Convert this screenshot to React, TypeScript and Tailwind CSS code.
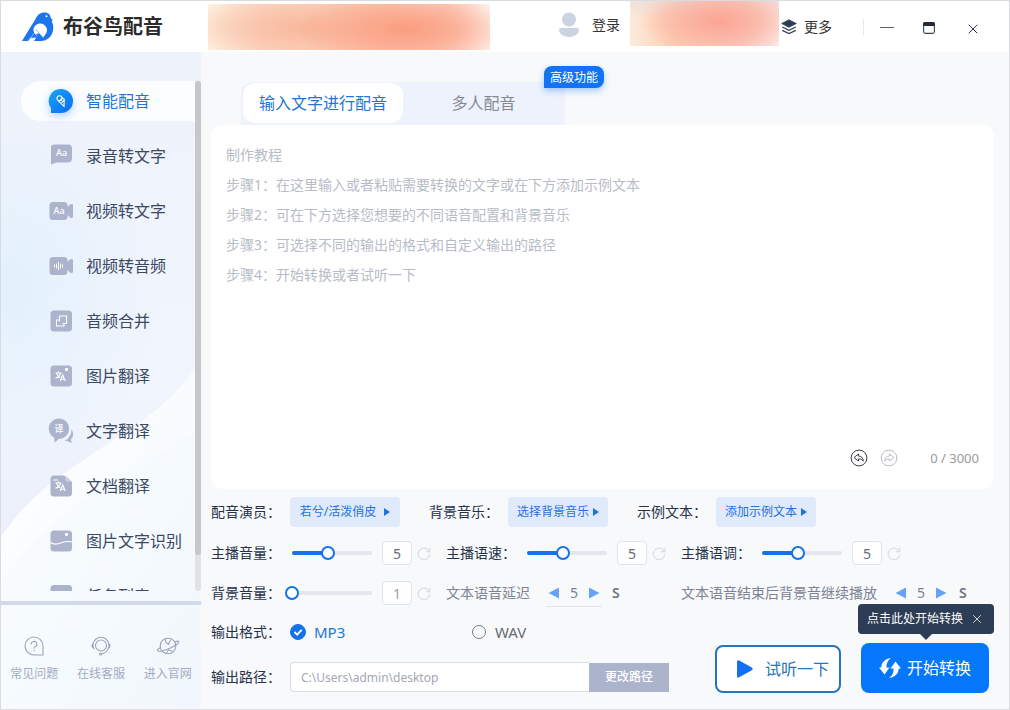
import { useState } from 'react'
import type { ReactNode } from 'react'
import { X } from 'lucide-react'

const navItems = [
  { key: 'voice', label: '智能配音' },
  { key: 'audioText', label: '录音转文字' },
  { key: 'videoText', label: '视频转文字' },
  { key: 'videoAudio', label: '视频转音频' },
  { key: 'merge', label: '音频合并' },
  { key: 'imageTrans', label: '图片翻译' },
  { key: 'textTrans', label: '文字翻译' },
  { key: 'docTrans', label: '文档翻译' },
  { key: 'ocr', label: '图片文字识别' },
  { key: 'tasks', label: '任务列表' },
]

const tutorial = [
  '制作教程',
  '步骤1：在这里输入或者粘贴需要转换的文字或在下方添加示例文本',
  '步骤2：可在下方选择您想要的不同语音配置和背景音乐',
  '步骤3：可选择不同的输出的格式和自定义输出的路径',
  '步骤4：开始转换或者试听一下',
].join('\n')

function Logo() {
  return (
    <svg viewBox="0 0 32 30" className="h-[30px] w-8">
      <path d="M0 29 13.500 7C15.500 3 18 .6 22.500 .6c4 0 6 2.400 6.200 5.200l2 2.400-1 1c1.300 2.600 1.800 5 1.500 8C30.500 24 25.500 29 18.500 29h-6.500l2.200-3.600L8 26l-2 3z" fill="#1c74ee" />
      <path d="M13.200 22.500a6.800 6.600 0 1 1 11-1.300l-3 4.200-3.800-4.200z" fill="#fff" />
      <path d="m13.500 17 7.500 8.500M6 29l6.500-8 3 3.500" stroke="#8dbbf8" strokeWidth="1" fill="none" />
      <circle cx="24.500" cy="4.200" r="1" fill="#fff" />
    </svg>
  )
}

// glifo "文A" usado nos itens de tradução
function TransGlyph() {
  return (
    <g fill="none" stroke="#fff" strokeWidth="1.100">
      <path d="M6.500 9h6M9.500 7.500V9M11.500 9c-.6 2.500-2.500 4.300-5 5.200M7.500 9.500c.8 2 2 3.500 3.800 4.300" />
      <path d="m11.300 17 2.400-6 2.500 6M12.200 15.200h3" />
    </g>
  )
}

function NavIcon({ name }: { name: string }) {
  const fill = '#abb4cc'
  return (
    <svg viewBox="0 0 24 24" className={`h-6 w-6 shrink-0 overflow-visible ${name === 'voice' ? 'drop-shadow-[0_3px_4px_rgba(30,130,255,0.35)]' : ''}`}>
      {name === 'voice' && (
        <>
          <defs>
            <linearGradient id="voiceFill" x1="0" y1="0" x2="1" y2="1">
              <stop offset="0" stopColor="#16a5f5" />
              <stop offset="1" stopColor="#0c6cf0" />
            </linearGradient>
          </defs>
          <path d="M12 0a12 12 0 1 1 0 24H2v-5A12 12 0 0 1 12 0z" fill="url(#voiceFill)" />
          <g fill="none" stroke="#fff" strokeWidth="1.100">
            <circle cx="10.500" cy="9.300" r="2.500" />
            <path d="m8.800 11.300 6.200 6 .2-7.200-2.400-1.300M10.500 11.800l2.500-2M12.500 13.500l2.500-2" />
          </g>
        </>
      )}
      {name === 'audioText' && (
        <>
          <path d="M5 .5h14a4 4 0 0 1 4 4v10a4 4 0 0 1-4 4H7.500L2 20.500V3.500a3 3 0 0 1 3-3z" fill={fill} />
          <text x="7" y="12" fontSize="9" fill="#fff" className="font-medium">Aa</text>
        </>
      )}
      {(name === 'videoText' || name === 'videoAudio') && (
        <>
          <path d="M4 3h11a3.500 3.500 0 0 1 3.500 3.500V8L21 5.600Q23.500 4 24 6v12q-.5 2-3 .4L18.500 16v1.500A3.500 3.500 0 0 1 15 21H4a3.500 3.500 0 0 1-3.500-3.500v-11A3.500 3.500 0 0 1 4 3z" fill={fill} />
          {name === 'videoText' ? (
            <text x="4.500" y="15" fontSize="9" fill="#fff" className="font-medium">Aa</text>
          ) : (
            <path d="M5.500 10.500v3M7.500 9.500v5M9.500 8v8M11.500 9.500v5M13.500 10.500v3" stroke="#fff" strokeWidth="1" />
          )}
        </>
      )}
      {name === 'merge' && (
        <>
          <rect x="1.500" y="1.500" width="21.500" height="21" rx="3.500" fill={fill} />
          <path d="M10.500 7h7v7.500h-2.500V17H7.500v-6h3zM10.500 11v1.500M15 14.500h-1.500" fill="none" stroke="#fff" strokeWidth="1.100" />
        </>
      )}
      {name === 'imageTrans' && (
        <>
          <rect x="1.500" y="1.500" width="21.500" height="21" rx="3.500" fill={fill} />
          <TransGlyph />
          <rect x="16" y="4" width="3" height="3" rx="1" fill="#fff" />
        </>
      )}
      {name === 'textTrans' && (
        <>
          <path d="M22.500 10.500c2.500 3.500 2 7.500-.5 9.700l.5 4-4-2.200h-3c4-2 7-6 7-11.500z" fill={fill} />
          <path d="M10.500-.5a10.200 10.200 0 1 1-1 20.400L5.500 24l-.2-5.200A10.200 10.200 0 0 1 10.500-.5z" fill={fill} />
          <text x="5.500" y="13" fontSize="9" fill="#fff" className="font-medium">译</text>
        </>
      )}
      {name === 'docTrans' && (
        <>
          <path d="M5 1.500h10l8 6.500v11a3.500 3.500 0 0 1-3.500 3.500H5A3.500 3.500 0 0 1 1.500 19V5A3.500 3.500 0 0 1 5 1.500z" fill={fill} />
          <path d="M16.500 1.500 23 7.500h-4.500a2 2 0 0 1-2-2z" fill="#ccd3e3" />
          <path d="M4 6h5" stroke="#fff" strokeWidth="1" />
          <TransGlyph />
        </>
      )}
      {name === 'ocr' && (
        <>
          <rect x="1.500" y="1.500" width="21.500" height="21" rx="3.500" fill={fill} />
          <path d="M1.500 13.500c4 3 7.500 1.500 11 .3s6.500-2 10.500-.8" fill="none" stroke="#fff" strokeWidth="1.200" />
          <rect x="16" y="4" width="3" height="3" rx="1" fill="#fff" />
        </>
      )}
      {name === 'tasks' && <rect x="1.500" y="1" width="21.500" height="22" rx="3.500" fill={fill} />}
    </svg>
  )
}

function ResetIcon() {
  return (
    <svg viewBox="0 0 14 14" className="h-3.5 w-3.5" fill="none" stroke="#dcdfe6" strokeWidth="1.200">
      <path d="M12.300 5.500A5.800 5.800 0 1 0 12.800 8M12.800 1.500v4.200H9" />
    </svg>
  )
}

function SliderField({ id, label, initial, muted }: { id: string; label: string; initial: number; muted?: boolean }) {
  const [value, setValue] = useState(initial)
  const percent = ((value - 1) / 9) * 100
  return (
    <div className="flex h-6 items-center">
      <label htmlFor={id} className="w-[81px] shrink-0 text-[#27324a]">{label}</label>
      <div className="relative h-1 w-20 shrink-0 rounded-full bg-[#e3e6ec]">
        <div className="h-1 rounded-full bg-[#1472ea]" style={{ width: `${percent}%` }} />
        <input
          id={id}
          type="range"
          min={1}
          max={10}
          value={value}
          onChange={(e) => setValue(Number(e.target.value))}
          className="absolute -top-[5px] -left-[7px] h-3.5 w-[94px] appearance-none bg-transparent [&::-webkit-slider-thumb]:h-3.5 [&::-webkit-slider-thumb]:w-3.5 [&::-webkit-slider-thumb]:appearance-none [&::-webkit-slider-thumb]:rounded-full [&::-webkit-slider-thumb]:border-2 [&::-webkit-slider-thumb]:border-[#1472ea] [&::-webkit-slider-thumb]:bg-white"
        />
      </div>
      <input
        aria-label={label}
        value={value}
        onChange={(e) => setValue(Number(e.target.value) || 1)}
        className={`ml-2.5 h-6 w-[30px] rounded-sm border border-[#dde3f0] bg-white text-center ${muted ? 'text-[#9a9fa9]' : 'text-[#666c78]'}`}
      />
      <button type="button" aria-label="重置" className="ml-[5px]"><ResetIcon /></button>
    </div>
  )
}

function Stepper({ label, underlined }: { label: string; underlined?: boolean }) {
  const [value, setValue] = useState(5)
  return (
    <div className="flex h-6 items-center whitespace-nowrap text-[#7c8393]">
      <span>{label}</span>
      <div className={`ml-4 flex h-7 w-14 shrink-0 items-center justify-between border-b px-0.5 ${underlined ? 'border-[#e0e4ec]' : 'border-transparent'}`}>
        <button type="button" aria-label="减少" onClick={() => setValue(value - 1)}>
          <svg viewBox="0 0 11 12" className="h-3 w-[11px]"><path d="M11 .5v11L.5 6z" fill="#66a3f7" /></svg>
        </button>
        <span>{value}</span>
        <button type="button" aria-label="增加" onClick={() => setValue(value + 1)}>
          <svg viewBox="0 0 11 12" className="h-3 w-[11px]"><path d="M0 .5v11L10.500 6z" fill="#66a3f7" /></svg>
        </button>
      </div>
      <span className="ml-2.5 font-semibold text-[#70757f]">S</span>
    </div>
  )
}

function PickButton({ label, children, wide }: { label: string; children: ReactNode; wide?: boolean }) {
  return (
    <div className="flex items-center">
      <span className="w-[79px] text-[#27324a]">{label}</span>
      <button type="button" className={`flex h-[30px] items-center justify-center rounded-sm bg-[#e0eafa] text-xs text-[#1d72dc] ${wide ? 'w-[110px] gap-2' : 'w-[100px] gap-1'}`}>
        {children}
        <svg viewBox="0 0 6 8" className="h-2 w-1.5"><path d="M0 0v8l6-4z" fill="#1d72dc" /></svg>
      </button>
    </div>
  )
}

function FooterLink({ label, children }: { label: string; children: ReactNode }) {
  return (
    <a href="#" className="flex flex-1 flex-col items-center gap-2 text-xs leading-5 whitespace-nowrap text-[#a3abc2]">
      <svg viewBox="0 0 20 20" className="h-5 w-5 overflow-visible" fill="none" stroke="#9ba3ba" strokeWidth="1.100">{children}</svg>
      {label}
    </a>
  )
}

export default function App() {
  const [text, setText] = useState('')
  const [format, setFormat] = useState('MP3')
  const [path, setPath] = useState('C:\\Users\\admin\\desktop')

  return (
    <div className="flex h-screen min-h-[640px] flex-col border border-[#d9dbde] bg-[#f7f9fb] font-['Noto_Sans','Noto_Sans_CJK_SC',sans-serif] text-sm leading-5">
      {/* Barra de título */}
      <header className="flex h-[51px] shrink-0 items-center bg-white text-[#333]">
        <div className="flex flex-1 items-center pl-[21px]">
          <Logo />
          <h1 className="ml-[9px] text-xl font-bold whitespace-nowrap text-[#2b2b2b]">布谷鸟配音</h1>
          <div className="ml-[45px] h-[46px] w-[282px] bg-[radial-gradient(ellipse_110px_38px_at_70%_55%,#fb9d7f_0%,#fba78ccc_45%,transparent_100%),radial-gradient(ellipse_130px_38px_at_35%_52%,#f8b89b_0%,#f9c2a9aa_55%,transparent_100%),linear-gradient(90deg,#fff3e6_0%,#fbdcc8_20%,#fbcdb9_60%,#fbd3c5_85%,#fff3ee_100%)]" />
        </div>
        <button type="button" className="flex items-center gap-3 pr-2.5 pb-1">
          <svg viewBox="0 0 22 26" className="h-[26px] w-[22px]" fill="#cbd2e1">
            <circle cx="11" cy="7.500" r="7" />
            <path d="M3 16h16q2 0 2 2c0 4-5 7-10 7s-10-3-10-7q0-2 2-2z" />
          </svg>
          登录
        </button>
        <div className="h-[45px] w-[149px] self-start bg-[radial-gradient(ellipse_80px_38px_at_60%_45%,#fba594_0%,#fbb3a2cc_50%,transparent_100%),linear-gradient(180deg,#e9dfe0aa_0%,transparent_40%),linear-gradient(90deg,#fdeadb_0%,#fcd2b4_30%,#fcd3c8_75%,#fdeceb_100%)]" />
        <button type="button" className="ml-0.5 flex items-center gap-[7px]">
          <svg viewBox="0 0 16 16" className="h-4 w-4" fill="none" stroke="#33435a" strokeWidth="1.300">
            <path d="m8 1 6.800 3.500L8 8 1.200 4.500z" fill="#2c3c54" />
            <path d="M1.200 8 8 11.300 14.800 8M1.200 11.300 8 14.600l6.800-3.300" />
          </svg>
          更多
        </button>
        <div className="ml-[31px] h-4 w-px bg-[#e6e8ec]" />
        <button type="button" aria-label="最小化" className="ml-4 flex h-6 w-3.5 items-center pt-0.5">
          <span className="h-px w-3.5 bg-[#55606f]" />
        </button>
        <button type="button" aria-label="最大化" className="ml-[29px] pt-0.5">
          <svg viewBox="0 0 12 12" className="h-3 w-3">
            <rect x=".6" y=".6" width="10.800" height="10.800" rx="1.800" fill="#fff" stroke="#3a4552" strokeWidth="1.100" />
            <path d="M0 4V2q0-2 2-2h8q2 0 2 2v2z" fill="#222c39" />
          </svg>
        </button>
        <button type="button" aria-label="关闭" className="mr-7 ml-[30px] pt-1">
          <X className="h-4 w-4 text-[#2c3846]" strokeWidth={1.5} />
        </button>
      </header>

      <div className="flex min-h-0 flex-1">
        {/* Menu lateral */}
        <aside className="relative flex w-[200px] shrink-0 flex-col bg-[radial-gradient(ellipse_160px_180px_at_0%_36%,#e2f1fd_0%,transparent_100%),linear-gradient(180deg,#eef2fb_0%,#f1f5fd_50%,#ebf0fc_72%)]">
          <svg viewBox="0 0 200 657" preserveAspectRatio="none" className="absolute inset-0 h-full w-full">
            <defs>
              <linearGradient id="waveFill" x1="0" y1="0" x2="1" y2="1">
                <stop offset="0" stopColor="#fdfeff" />
                <stop offset=".5" stopColor="#f9fcff" />
                <stop offset="1" stopColor="#f0f4fc" />
              </linearGradient>
            </defs>
            <path d="M0 485C30 440 65 420 105 393S172 350 200 308V657H0z" fill="url(#waveFill)" />
            <path d="M0 532C40 470 90 440 200 378V657H0z" fill="#f4f9fe" opacity=".5" />
          </svg>
          <div className="relative mt-[29px] mb-2.5 flex min-h-0 flex-1 overflow-hidden">
            <nav className="flex flex-1 flex-col gap-[15px] overflow-hidden pl-5">
              {navItems.map((item) => (
                <a
                  key={item.key}
                  href={`#${item.key}`}
                  className={`flex h-10 shrink-0 items-center gap-[13px] rounded-l-full pl-7 text-base whitespace-nowrap ${item.key === 'voice' ? 'bg-[#fbfdff] text-[#2374d8]' : 'text-[#3d4963]'}`}
                >
                  <NavIcon name={item.key} />
                  {item.label}
                </a>
              ))}
            </nav>
            <div className="w-1.5 shrink-0 rounded-full bg-[#e1e2e4]">
              <div className="h-[93%] rounded-full bg-[#c5c7c9]" />
            </div>
          </div>
          <div className="relative flex border-t-4 border-[#d1d9ea] pt-[31px] pb-[25px]">
            <FooterLink label="常见问题">
              <path d="M19 19h-9a9 9 0 1 1 9-9z" />
              <path d="M7.200 8.200a2.800 2.800 0 1 1 4.200 2.400q-1.400.8-1.400 2.200M10 14v1.200" />
            </FooterLink>
            <FooterLink label="在线客服">
              <circle cx="10" cy="9.500" r="5.500" />
              <path d="M3.200 13.500a8 8 0 1 1 13.600 0M2 7.500Q.2 9.800 2 12M18 7.500q1.800 2.300 0 4.500M16.800 13.500Q14 17.500 10 17.800" />
              <circle cx="9.500" cy="18" r="1" />
            </FooterLink>
            <FooterLink label="进入官网">
              <circle cx="10" cy="10" r="7.800" />
              <path d="M2.500 11.500C-1 13.500-1.500 15 1 15.200 6 15.500 21 9 20.800 5.800c0-1-1.600-.8-3.600-.2M7 3l1 3.500 2.500 2 2-4.500M8 17.500l2.500-3.500 4 1" />
            </FooterLink>
          </div>
        </aside>

        {/* Área principal */}
        <main className="flex min-w-0 flex-1 flex-col pt-[30px] pr-[15px] pb-4 pl-2.5">
          <div className="relative ml-[30px] flex w-[324px] shrink-0 rounded-tl-xl bg-[#edf2fd] p-px pb-0.5 pl-0.5 text-base">
            <button type="button" className="h-10 w-40 rounded-xl bg-white text-[#2374d8]">输入文字进行配音</button>
            <button type="button" className="h-10 flex-1 text-[#84888f]">多人配音</button>
            <span className="absolute -top-4 left-[303px] rounded-lg rounded-bl-none bg-[#1273f3] px-1.5 pt-0.5 text-xs leading-5 whitespace-nowrap text-white shadow-[0_3px_6px_rgba(18,115,243,0.35)]">高级功能</span>
          </div>

          <section className="flex min-h-0 flex-1 flex-col rounded-xl bg-white pt-[15px] pr-[15px] pb-[21px] pl-[15px]">
            <textarea
              aria-label="配音文本"
              maxLength={3000}
              value={text}
              onChange={(e) => setText(e.target.value)}
              placeholder={tutorial}
              className="min-h-0 flex-1 resize-none bg-transparent leading-[30px] text-[#3d4963] outline-none placeholder:text-[#b7bcc6]"
            />
            <div className="flex items-center justify-end text-[13px] text-[#999]">
              <button type="button" aria-label="撤销">
                <svg viewBox="0 0 18 18" className="h-[18px] w-[18px]" fill="none" stroke="#3b3f46">
                  <circle cx="9" cy="9" r="7.900" />
                  <path d="M8.500 5 4 8.500 8.500 12v-2c2.500-.2 3.800.6 4.800 2.200 0-3-1.500-5-4.800-5.200z" />
                </svg>
              </button>
              <button type="button" aria-label="重做" className="ml-3">
                <svg viewBox="0 0 18 18" className="h-[18px] w-[18px]" fill="none" stroke="#b9bcc3">
                  <circle cx="9" cy="9" r="7.900" />
                  <path d="M9.500 5 14 8.500 9.500 12v-2c-2.500-.2-3.800.6-4.800 2.200 0-3 1.500-5 4.800-5.200z" />
                </svg>
              </button>
              <span className="ml-8">{text.length} / 3000</span>
            </div>
          </section>

          <div className="mt-2 flex gap-[29px] whitespace-nowrap">
            <PickButton label="配音演员：" wide>若兮/活泼俏皮</PickButton>
            <PickButton label="背景音乐：">选择背景音乐</PickButton>
            <PickButton label="示例文本：">添加示例文本</PickButton>
          </div>

          <div className="mt-3.5 grid grid-cols-[235px_235px_1fr] gap-y-4">
            <SliderField id="volume" label="主播音量：" initial={5} />
            <SliderField id="speed" label="主播语速：" initial={5} />
            <SliderField id="pitch" label="主播语调：" initial={5} />
            <SliderField id="bgVolume" label="背景音量：" initial={1} muted />
            <Stepper label="文本语音延迟" underlined />
            <Stepper label="文本语音结束后背景音继续播放" />
          </div>

          <div className="mt-[17px] flex items-end justify-between pr-[5px]">
            <div className="flex flex-col gap-5 pb-px">
              <fieldset className="flex h-5 items-center">
                <legend className="float-left w-[79px] text-[#27324a]">输出格式：</legend>
                {['MP3', 'WAV'].map((name) => (
                  <label key={name} className={`flex w-[181px] items-center gap-2 text-[15px] ${format === name ? 'text-[#2374d8]' : 'text-[#666b75]'}`}>
                    <span className="relative flex h-4 w-4 items-center justify-center">
                      <input
                        type="radio"
                        name="format"
                        value={name}
                        checked={format === name}
                        onChange={() => setFormat(name)}
                        className="h-3.5 w-3.5 appearance-none rounded-full border border-[#777c86] checked:h-4 checked:w-4 checked:border-[#1472ea] checked:bg-[#1472ea]"
                      />
                      {format === name && (
                        <svg viewBox="0 0 16 16" className="pointer-events-none absolute inset-0" fill="none" stroke="#fff" strokeWidth="1.800">
                          <path d="m4.500 8 2.600 2.600 4.600-4.800" />
                        </svg>
                      )}
                    </span>
                    {name}
                  </label>
                ))}
              </fieldset>
              <div className="flex h-[30px] items-center">
                <label htmlFor="path" className="w-[79px] text-[#27324a]">输出路径：</label>
                <input
                  id="path"
                  value={path}
                  onChange={(e) => setPath(e.target.value)}
                  className="h-[30px] w-[299px] rounded-l-sm border border-r-0 border-[#d9dfea] bg-white px-2.5 text-xs text-[#a3a8b3]"
                />
                <button type="button" className="h-[29px] w-20 bg-[#abb4cb] text-xs font-medium text-white">更改路径</button>
              </div>
            </div>

            <div className="flex items-end gap-5">
              <button type="button" className="flex h-12 w-[126px] items-center justify-end gap-3 rounded-lg border-2 border-[#2874bd] bg-white pr-2.5 text-base text-[#2874bd]">
                <svg viewBox="0 0 16 18" className="h-[18px] w-4"><path d="M0 2q0-2.500 2.200-1.400l12.600 7q1.800 1.300 0 2.600l-12.600 7Q0 18.500 0 16z" fill="#146ff5" /></svg>
                试听一下
              </button>
              <div className="relative">
                <div className="absolute -right-[5px] bottom-full mb-[9px] flex h-[30px] items-center gap-1.5 rounded bg-[#2d3d55] px-[9px] text-xs whitespace-nowrap text-white">
                  点击此处开始转换
                  <button type="button" aria-label="关闭提示" className="flex w-4 justify-center"><X className="h-3.5 w-3.5" strokeWidth={1.300} /></button>
                  <svg viewBox="0 0 12 6" className="absolute top-full left-[62px] h-1.5 w-3"><path d="M0 0h12L6 6z" fill="#2d3d55" /></svg>
                </div>
                <button type="button" className="flex h-[50px] w-32 items-center justify-center gap-1.5 rounded-lg bg-[#0477fa] text-base text-white">
                  <svg viewBox="0 0 22 20" className="h-5 w-[22px]" fill="#fff">
                    <path d="M12 0C6 .8 2.300 4.500 2.300 9.500H0l5.500 7 5-7H7.500C7 6 8.500 2.500 12 0z" />
                    <path d="M10 20c6-.8 9.700-4.500 9.700-9.500H22l-5.500-7-5 7h3c.5 3.500-1 7-4.500 9.500z" />
                  </svg>
                  开始转换
                </button>
              </div>
            </div>
          </div>
        </main>
      </div>
    </div>
  )
}
